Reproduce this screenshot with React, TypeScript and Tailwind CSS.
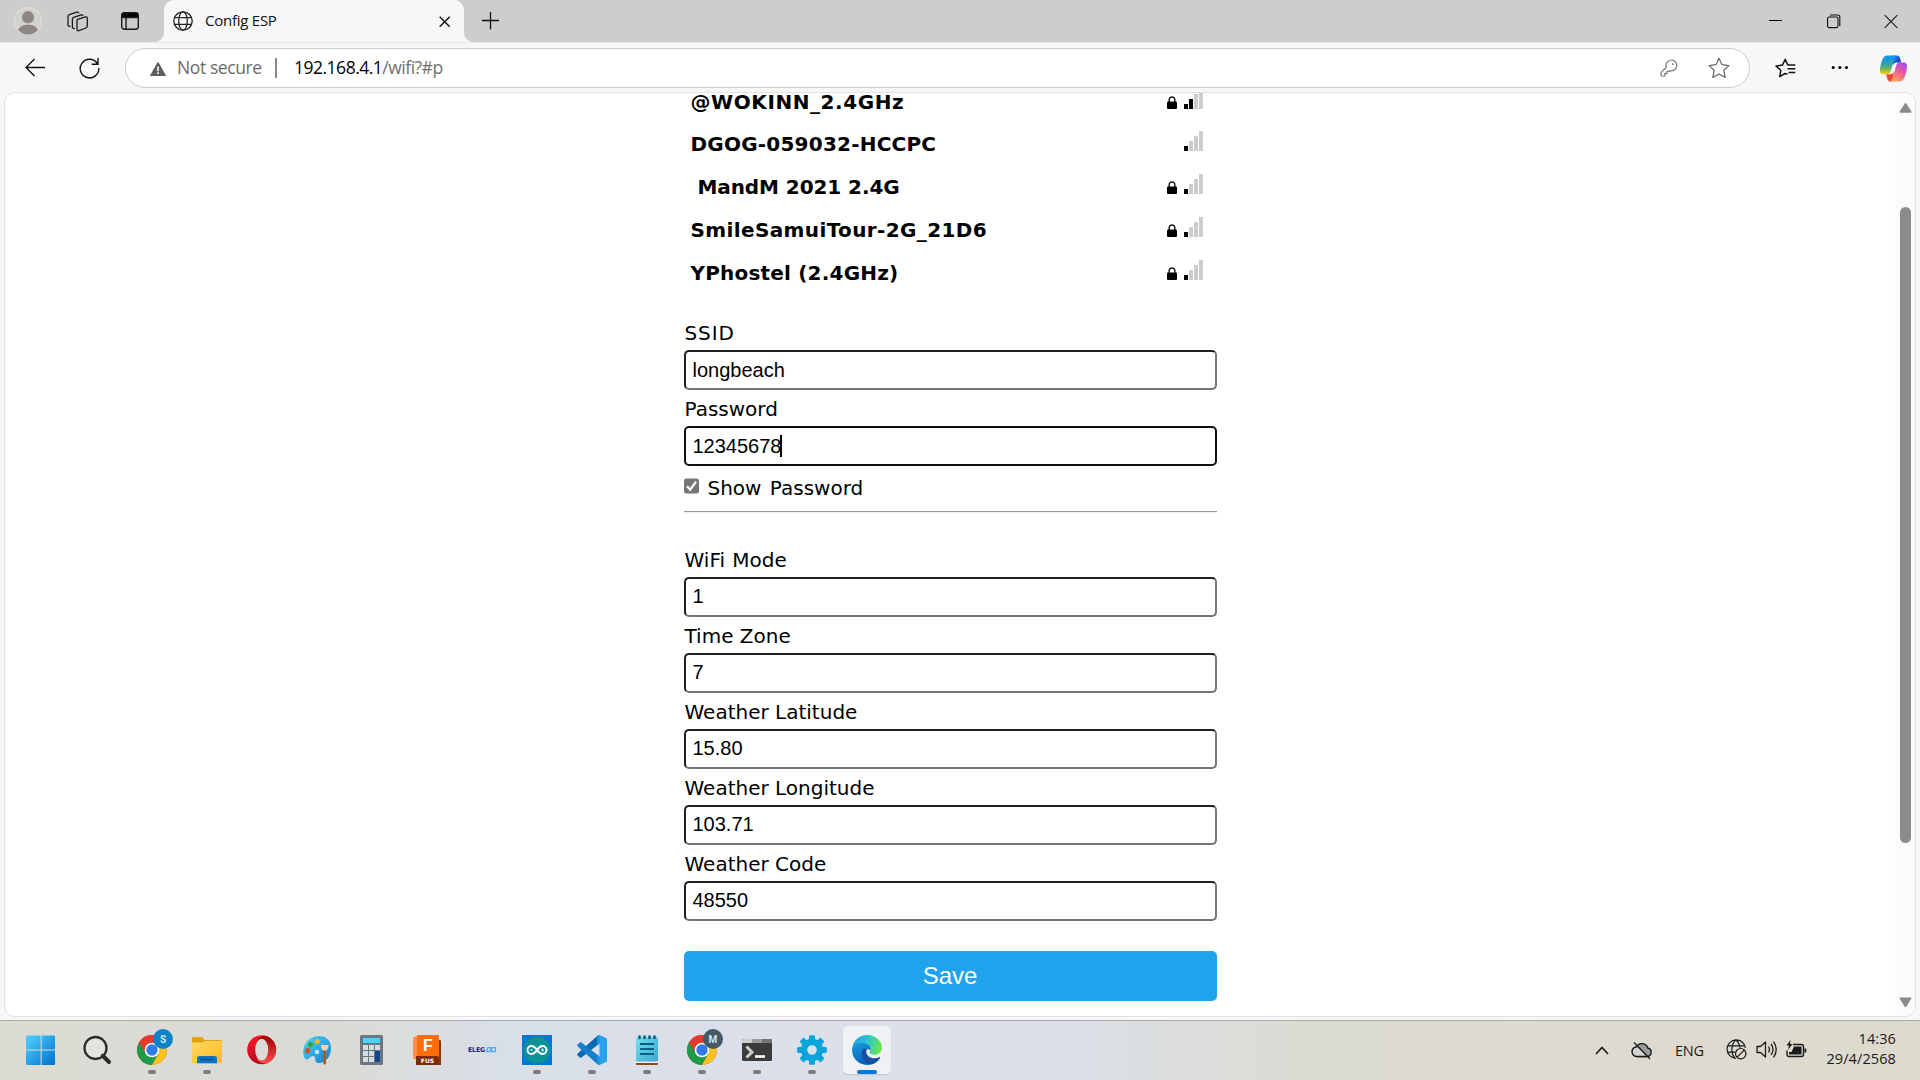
import React from "react";

type Kids = { children?: React.ReactNode };

/* ---------- Browser chrome ---------- */

function TitleBar() {
  return (
    <div className="flex h-[42px] shrink-0 bg-[#cdcdcd]">
      <div className="flex w-[164px] shrink-0 items-start">
        <svg className="mt-[7px] ml-[14px]" width="28" height="28" viewBox="0 0 28 28">
          <circle cx="14" cy="14" r="13.3" fill="#d3d1cd" stroke="#dedcd8" strokeWidth="1.2" />
          <circle cx="14" cy="10.2" r="6.1" fill="#8b8785" />
          <path d="M4 22.8c2-3.6 5.600-5 10-5s8 1.400 10 5c-2.600 3-6 4.700-10 4.700s-7.400-1.700-10-4.700z" fill="#8b8785" />
        </svg>
        <svg className="mt-[11px] ml-[25px]" width="21" height="21" viewBox="0 0 21 21" fill="none" stroke="#1b1b1b" strokeWidth="1.300" strokeLinejoin="round" strokeLinecap="round">
          <path d="M10.600 8.300 18.600 5.900c1-.3 1.700.2 1.700 1.200v8c0 .9-.5 1.600-1.400 1.900l-7 2.600c-1 .4-1.900-.1-1.900-1.200v-8.200c0-.9-.2-1.600.6-1.900z" />
          <path d="M7.300 17.500c-1 .2-1.900-.2-1.900-1.400V8.300c0-1 .5-1.700 1.400-2l7.300-2.400c.9-.3 1.500 0 1.700.6" />
          <path d="M3 15.300c-1.200.1-2-.3-2-1.400V5.600c0-1 .5-1.600 1.400-1.900l7.300-2.500c.9-.3 1.600-.1 1.900.6" />
        </svg>
        <svg className="mt-[12px] ml-[33px]" width="18" height="18" viewBox="0 0 18 18" fill="none" stroke="#1b1b1b" strokeWidth="1.400">
          <rect x=".7" y=".7" width="16.600" height="16.600" rx="2.800" />
          <path d="M.7 5.500V3.500A2.800 2.800 0 0 1 3.500.7h11a2.800 2.800 0 0 1 2.800 2.800v2z" fill="#000" />
          <path d="M5 5v12" />
        </svg>
      </div>
      <div className="relative flex h-[42px] w-[300px] shrink-0 rounded-t-[10px] bg-[#f7f7f7]">
        <svg className="absolute bottom-0 -left-[9px]" width="9" height="9" viewBox="0 0 9 9"><path d="M9 0v9H0A9 9 0 0 0 9 0z" fill="#f7f7f7" /></svg>
        <svg className="absolute -right-[9px] bottom-0" width="9" height="9" viewBox="0 0 9 9"><path d="M0 0v9h9A9 9 0 0 1 0 0z" fill="#f7f7f7" /></svg>
        <svg className="mt-[11px] ml-[9px]" width="20" height="20" viewBox="0 0 20 20" fill="none" stroke="#222" strokeWidth="1.300">
          <circle cx="10" cy="10" r="9.200" />
          <ellipse cx="10" cy="10" rx="4.300" ry="9.200" />
          <path d="M1.500 6.700h17M1.500 13.300h17" />
        </svg>
        <span className="mt-[9px] ml-[12px] w-[200px] font-['Open_Sans'] text-[15px] leading-[22px] tracking-[-0.25px] text-[#111]">Config ESP</span>
        <svg className="mt-[16px] ml-[34px]" width="12" height="12" viewBox="0 0 12 12" stroke="#111" strokeWidth="1.400"><path d="M.7.700l10 10M10.700.7.700 10.700" /></svg>
      </div>
      <svg className="mt-[12px] ml-[18px]" width="17" height="18" viewBox="0 0 17 18" stroke="#111" strokeWidth="1.300"><path d="M8.500 0v17.500M0 8.500h17" /></svg>
      <div className="mt-[14px] mr-[22px] ml-auto flex items-start">
        <svg className="mt-[6px]" width="13" height="2"><path d="M0 .5h13" stroke="#000" /></svg>
        <svg className="ml-[45px]" width="14" height="15" viewBox="0 0 14 15" fill="none" stroke="#111" strokeWidth="1.100">
          <rect x=".6" y="3" width="10.400" height="10.600" rx="1.500" />
          <path d="M3 1h7.500a2.300 2.300 0 0 1 2.300 2.300V12" />
        </svg>
        <svg className="ml-[43px]" width="14" height="15" viewBox="0 0 14 15" stroke="#222" strokeWidth="1.200"><path d="M.7 1.200 13.300 13.800M13.300 1.200.7 13.800" /></svg>
      </div>
    </div>
  );
}

const STAR = "M10 1.200 12.700 7l6.300.8-4.600 4.300 1.200 6.400L10 15.500 4.400 18.500l1.200-6.400L1 7.800 7.300 7z";

function Toolbar() {
  return (
    <div className="flex h-[50px] shrink-0 items-start border-t border-[#e6e6e6] bg-[#f7f7f7]">
      <svg className="mt-[15px] ml-[25px]" width="20" height="19" viewBox="0 0 20 19" fill="none" stroke="#111" strokeWidth="1.300"><path d="M9.500 1 1 9.500 9.500 18M1 9.500h19" /></svg>
      <svg className="mt-[14px] ml-[34px]" width="21" height="22" viewBox="0 0 21 22" fill="none" stroke="#111" strokeWidth="1.400">
        <path d="M18.300 6.500A9.300 9.300 0 1 0 19.800 11M19 1v6.300h-6.300" />
      </svg>
      <div className="mt-[5px] ml-[25px] flex h-[40px] w-[1625px] items-center rounded-full border border-[#cbcbcb] bg-white font-['Open_Sans']">
        <svg className="mt-[2px] ml-[24px]" width="16" height="14" viewBox="0 0 16 14">
          <path d="M8 .3c.4 0 .7.200.9.600l6.800 12c.3.500 0 1.100-.7 1.100H1c-.7 0-1-.6-.7-1.100l6.800-12c.2-.4.5-.6.9-.6z" fill="#5e5e5e" />
          <path d="M7.200 4.500h1.600v4.700H7.200zM7.200 10.300h1.600v1.700H7.200z" fill="#fff" />
        </svg>
        <span className="mb-[2px] ml-[11px] w-[98px] text-[17.500px] leading-[24px] tracking-[-0.4px] text-[#6b6b6b]">Not secure</span>
        <span className="h-[20px] w-[2px] bg-[#8a8a8a]" />
        <span className="mb-[2px] ml-[17px] text-[17.500px] leading-[24px] tracking-[-0.5px] text-[#6f6f6f]"><span className="text-black">192.168.4.1</span>/wifi?#p</span>
        <svg className="mr-[30px] ml-auto" width="18" height="18" viewBox="0 0 18 18" fill="none" stroke="#777" strokeWidth="1.200" strokeLinejoin="round">
          <path d="M11.500 1A5.400 5.400 0 0 0 6.400 8.300L1 13.600V16a1 1 0 0 0 1 1h2.800v-2.300H7v-2.300h2.200l.7-.8A5.400 5.400 0 1 0 11.500 1z" />
          <circle cx="12.900" cy="5.200" r=".9" fill="#777" stroke="none" />
        </svg>
        <svg className="mr-[19px]" width="22" height="22" viewBox="0 0 20 20" fill="none" stroke="#666" strokeWidth="1.100" strokeLinejoin="round"><path d={STAR} /></svg>
      </div>
      <svg className="mt-[15px] ml-[25px]" width="22" height="21" viewBox="0 0 22 21" fill="none" stroke="#111" strokeWidth="1.500" strokeLinejoin="round">
        <path d="M12.500 16.200 10 15.500 4.800 18.600 5.800 12.300 1 8l6.500-.9L10.200 1.200 12.800 7h7.500" />
        <path d="M12.500 10.800h7.800M13.500 14.600h6.800" />
      </svg>
      <svg className="mt-[22px] ml-[34px]" width="18" height="5" viewBox="0 0 18 5"><circle cx="2.200" cy="2.500" r="1.500" /><circle cx="8.900" cy="2.500" r="1.500" /><circle cx="15.500" cy="2.500" r="1.500" /></svg>
      <svg className="mt-[12px] ml-[30px]" width="29" height="27" viewBox="0 0 29 27">
        <defs>
          <linearGradient id="cpA" x1="0" y1="0" x2="0" y2="1"><stop offset=".1" stopColor="#1597e8" /><stop offset=".45" stopColor="#2f9fae" /><stop offset=".7" stopColor="#6cb655" /><stop offset="1" stopColor="#ffc91a" /></linearGradient>
          <linearGradient id="cpB" x1="0.800" y1="0" x2=".3" y2="1"><stop offset="0" stopColor="#a14af5" /><stop offset=".45" stopColor="#e9569e" /><stop offset="1" stopColor="#ffa45c" /></linearGradient>
          <linearGradient id="cpC" x1="0" y1="0" x2="1" y2="1"><stop offset="0" stopColor="#2ba4f3" /><stop offset=".6" stopColor="#1747c9" /><stop offset="1" stopColor="#2455dd" /></linearGradient>
        </defs>
        <path d="M14 .6h3.800c1.800 0 2.800 1 3.300 2.700l1.100 4.200h-4.500c-2 0-3.100 1-3.700 2.900z" fill="url(#cpC)" />
        <path d="M14.500 26.400h-3.200c-1.600 0-2.500-1-3-2.600L7 19.200h4c2 0 3-.7 3.600-2.600z" fill="#ea4a35" />
        <path d="M18 .6H8.400C5 .6 3.500 3.800 2.200 8.200.9 12.500-.6 19.200 4 19.200h4.200c2 0 3-1.200 3.600-3.100l3-10.300C15.500 3.300 16.200.6 18 .6z" fill="url(#cpA)" />
        <path d="M11 26.400h9.700c3.300 0 4.800-3.300 6-7.600 1.300-4.300 2.800-11.300-1.800-11.300h-4.100c-2 0-3 1.200-3.600 3.100l-3 10.200c-.7 2.700-1.400 5.600-3.200 5.600z" fill="url(#cpB)" />
      </svg>
    </div>
  );
}

/* ---------- Configuration page ---------- */

const BAR_HEIGHTS = ["h-[5px]", "h-[10px]", "h-[15px]", "h-[20px]"];

function Network({ children, locked = true, level = 1, height = "h-[43px]", spacing = "" }: Kids & { locked?: boolean; level?: number; height?: string; spacing?: string }) {
  return (
    <div className={`flex items-end pr-[14px] pl-[7px] ${height}`}>
      <span className={`mb-[13px] text-[20px] leading-[16px] font-bold whitespace-pre ${spacing}`}>{children}</span>
      {locked && (
        <svg className="mb-[14px] ml-auto" width="10" height="13" viewBox="0 0 10 13">
          <path d="M2.200 7V3.800a2.800 2.800 0 0 1 5.600 0V7" fill="none" stroke="#222" strokeWidth="1.500" />
          <rect y="5.500" width="10" height="7.500" rx="1" />
        </svg>
      )}
      <div className={`mb-[14px] flex items-end gap-px ${locked ? "ml-[7px]" : "ml-auto"}`}>
        {BAR_HEIGHTS.map((h, i) => (
          <span key={h} className={`w-[4px] ${h} ${i < level ? "bg-black" : "bg-[#cccccc]"}`} />
        ))}
      </div>
    </div>
  );
}

function Field({ label, value, focused = false, raised = false, spacing = "" }: { label: string; value: string; focused?: boolean; raised?: boolean; spacing?: string }) {
  return (
    <div>
      <div className={`flex h-[36px] items-center pt-[2px] pl-px text-[20px] whitespace-nowrap ${spacing}`}>{label}</div>
      <div
        className={`flex h-[40px] items-center rounded-[5px] border-2 bg-white pl-[7px] font-['Liberation_Sans'] text-[20px] leading-[24px] ${raised ? "pb-[2px]" : ""} ${
          focused ? "border-[#101010]" : "border-t-[#202020] border-r-[#767676] border-b-[#767676] border-l-[#202020]"
        }`}
      >
        <span>{value}</span>
        {focused && <span className="-ml-px h-[22px] w-[2px] bg-black" />}
      </div>
    </div>
  );
}

function ConfigPage() {
  return (
    <div className="mx-[4px] flex h-[925px] shrink-0 overflow-hidden rounded-[11px] border border-[#e2e2e2] bg-white font-['DejaVu_Sans'] text-black">
      <div className="flex flex-1 justify-center">
        <div className="w-[533px]">
          <div className="-mt-[12px]">
            <Network height="h-[42px]" level={2} spacing="tracking-[0.58px]">@WOKINN_2.4GHz</Network>
            <Network height="h-[42px]" locked={false} spacing="tracking-[0.22px]">DGOG-059032-HCCPC</Network>
            <Network spacing="tracking-[-0.07px]"> MandM 2021 2.4G</Network>
            <Network spacing="tracking-[0.38px]">SmileSamuiTour-2G_21D6</Network>
            <Network spacing="tracking-[0.2px]">YPhostel (2.4GHz)</Network>
          </div>
          <div className="mt-[20px]">
            <Field label="SSID" value="longbeach" spacing="tracking-[0.9px]" />
            <Field label="Password" value="12345678" focused />
          </div>
          <div className="flex h-[45px] items-start">
            <svg className="mt-[12px]" width="16" height="16" viewBox="0 0 16 16">
              <rect width="15" height="15" y=".5" rx="2.500" fill="#767676" />
              <path d="m3 8.300 3.200 3.400 5.800-8" fill="none" stroke="#fff" strokeWidth="2.200" />
            </svg>
            <span className="mt-[10px] ml-[8px] text-[20px] leading-[24px] [word-spacing:2px]">Show Password</span>
          </div>
          <div className="h-[2px] border-t border-[#9a9a9a] bg-[#eeeeee]" />
          <div className="mt-[28px]">
            <Field label="WiFi Mode" value="1" raised spacing="[word-spacing:1px]" />
            <Field label="Time Zone" value="7" raised />
            <Field label="Weather Latitude" value="15.80" raised />
            <Field label="Weather Longitude" value="103.71" raised />
            <Field label="Weather Code" value="48550" raised />
          </div>
          <button className="mt-[30px] flex h-[50px] w-full items-center justify-center rounded-[5px] bg-[#1fa3ec] font-['Liberation_Sans'] text-[24px] text-white">Save</button>
        </div>
      </div>
      <div className="flex w-[20px] flex-col items-center bg-[#fbfbfb]">
        <svg className="mt-[9px] shrink-0" width="13" height="11" viewBox="0 0 13 11"><path d="M6.500 1.700 11.800 10H1.200z" fill="#8b8b8b" stroke="#8b8b8b" strokeWidth="1.500" strokeLinejoin="round" /></svg>
        <div className="mt-[94px] h-[636px] w-[11px] shrink-0 rounded-full bg-[#8b8b8b]" />
        <svg className="mt-[154px] shrink-0" width="13" height="11" viewBox="0 0 13 11"><path d="M6.500 9.500 1.200 1.200h10.600z" fill="#8b8b8b" stroke="#8b8b8b" strokeWidth="1.500" strokeLinejoin="round" /></svg>
      </div>
    </div>
  );
}

/* ---------- Taskbar ---------- */

function Icon({ children }: Kids) {
  return <svg width="30" height="30" viewBox="0 0 30 30" className="overflow-visible">{children}</svg>;
}

function Task({ children, running = false, active = false }: Kids & { running?: boolean; active?: boolean }) {
  return (
    <div className={`relative flex size-[48px] items-center justify-center rounded-[5px] ${active ? "bg-[#eff1f4] shadow-[0_1px_1px_rgba(0,0,0,0.12)]" : ""}`}>
      {children}
      {running && <span className="absolute bottom-0 left-[20px] h-[4px] w-[8px] rounded-full bg-[#7c7c7c]" />}
      {active && <span className="absolute bottom-0 left-[14px] h-[4px] w-[20px] rounded-full bg-[#0078d7]" />}
    </div>
  );
}

function Chrome({ letter, color }: { letter: string; color: string }) {
  return (
    <div className="relative">
      <Icon>
        <circle cx="15" cy="15" r="15" fill="#ea4335" />
        <path d="M15 15 2 7.500A15 15 0 0 0 15 30l6.500-11.200z" fill="#1f9a48" />
        <path d="M15 8h13.200A15 15 0 0 1 15 30l6.500-11.200z" fill="#fcc31e" />
        <path d="M2 7.500A15 15 0 0 1 28.200 8H15L8.900 18.500z" fill="#e33b2e" />
        <circle cx="15" cy="15" r="7.300" fill="#fff" />
        <circle cx="15" cy="15" r="5.700" fill="#2f7bee" />
      </Icon>
      <span className={`absolute -top-[6px] left-[16px] flex size-[20px] items-center justify-center rounded-full font-['Roboto'] text-[10px] font-bold text-[#cfe4f0] ${color}`}>{letter}</span>
    </div>
  );
}

function Taskbar() {
  return (
    <div className="flex h-[60px] shrink-0 border-t border-[#a9a9a9] bg-[linear-gradient(90deg,#dcdbd4_0%,#dbdbd5_17%,#d9dfe8_26%,#dbe0ea_45%,#dbdfe6_56%,#dcdbd3_68%,#dddbd1_85%,#dddacd_100%)]">
      <div className="mt-[5px] ml-[18px] flex gap-[7px]">
        <Task>
          <Icon>
            <defs><linearGradient id="win" x1="0" y1="0" x2="1" y2="1"><stop offset="0" stopColor="#51d3fb" /><stop offset="1" stopColor="#0070d0" /></linearGradient></defs>
            <path d="M0 .5h13.600v14H-1v-13a1 1 0 0 1 1-1zM14.600.5H27a1 1 0 0 1 1 1v13H14.600zM-1 15.500h14.600V30H0a1 1 0 0 1-1-1zM14.600 15.500H28V29a1 1 0 0 1-1 1H14.600z" fill="url(#win)" />
          </Icon>
        </Task>
        <Task>
          <Icon>
            <path d="M20.500 20.500 27 27" stroke="#2b2b2b" strokeWidth="4" strokeLinecap="round" />
            <circle cx="13.500" cy="13" r="11" fill="#ffffff40" stroke="#2b2b2b" strokeWidth="2.300" />
          </Icon>
        </Task>
        <Task running><Chrome letter="S" color="bg-[#0a83c9]" /></Task>
        <Task running>
          <Icon>
            <defs><linearGradient id="fold" x1="0" y1="0" x2="1" y2="1"><stop offset="0" stopColor="#ffd766" /><stop offset="1" stopColor="#fdbb22" /></linearGradient></defs>
            <path d="M0 3.500A1.500 1.500 0 0 1 1.500 2h8.200c1.300 0 2 3 3.300 3h15.500A1.500 1.500 0 0 1 30 6.500V10H0z" fill="#e2a20d" />
            <path d="M0 7.500h10c1.500 0 2-1.500 3.500-1.500H30v21a1.200 1.200 0 0 1-1.200 1.200H1.200A1.200 1.200 0 0 1 0 27z" fill="url(#fold)" />
            <path d="M5 28.200V23.500a2.500 2.500 0 0 1 2.500-2.500h15a2.500 2.500 0 0 1 2.500 2.500v4.700z" fill="#1272c4" />
            <path d="M8.500 24.500h13" stroke="#064a8a" strokeWidth="1.300" />
          </Icon>
        </Task>
        <Task>
          <Icon>
            <defs>
              <linearGradient id="opA" x1="0" y1="0" x2="0" y2="1"><stop offset="0" stopColor="#ff1b2d" /><stop offset="1" stopColor="#b50a19" /></linearGradient>
              <linearGradient id="opB" x1="0" y1="0" x2="0" y2="1"><stop offset="0" stopColor="#9c0000" /><stop offset="1" stopColor="#ff4b4b" /></linearGradient>
            </defs>
            <circle cx="14.700" cy="14.700" r="14.500" fill="url(#opA)" />
            <path d="M10 5.200a9 9 0 0 1 14-1.500 14.500 14.500 0 0 1 0 22 9 9 0 0 1-14-1.500z" fill="url(#opB)" />
            <ellipse cx="14.700" cy="14.700" rx="6.500" ry="10.900" fill="#dcdcd7" />
          </Icon>
        </Task>
        <Task>
          <Icon>
            <defs><linearGradient id="pal" x1="0" y1="0" x2="1" y2="1"><stop offset="0" stopColor="#55d4f8" /><stop offset="1" stopColor="#0c7ed6" /></linearGradient></defs>
            <path d="M16 1C24 .5 29 5.500 29 13c0 8-5 15-12 15-6 0-2-6-5.500-7S6 27 3 23.500C-.5 19 0 3 16 1z" fill="url(#pal)" />
            <circle cx="15.400" cy="6.600" r="2.500" fill="#f4b90e" /><circle cx="8.500" cy="9.500" r="2.500" fill="#35a820" />
            <circle cx="5.600" cy="15.700" r="2.600" fill="#d2521d" /><circle cx="15" cy="17" r="2.200" fill="#c9ebfb" />
            <path d="M19 10h7.500c.3 3-1.500 4.500-2.300 6h-3c-.8-1.500-2.500-3-2.200-6z" fill="#f1d5b3" />
            <path d="M21.300 15.500h2.800V28c0 2-2.800 2-2.800 0z" fill="#a85d18" />
          </Icon>
        </Task>
        <Task>
          <Icon>
            <rect x="3" y="0" width="23" height="30" rx="1.500" fill="#6c7781" />
            <rect x="6" y="3" width="17" height="5" fill="#45d6fb" />
            <path d="M6 10h5v5H6zM12 10h5v5h-5zM18 10h5v5h-5zM6 16h5v5H6zM12 16h5v5h-5zM6 22h5v5H6zM12 22h5v5h-5z" fill="#d6dde2" />
            <path d="M18 16h5v11h-5z" fill="#12458b" />
          </Icon>
        </Task>
        <Task>
          <Icon>
            <path d="m1 2.500 5-2v25l-5-2z" fill="#ff9248" /><path d="M25 4l4 1.500V30H6l-1-5z" fill="#8a3400" />
            <rect x="5" width="22" height="22" rx="1" fill="#ff6c0a" /><rect x="4" y="21" width="22" height="9" fill="#7b2c05" />
            <text x="16" y="16" textAnchor="middle" fill="#fff" fontFamily="Liberation Sans" fontWeight="700" fontSize="16">F</text>
            <text x="15.500" y="28" textAnchor="middle" fill="#fff" fontFamily="DejaVu Sans" fontWeight="700" fontSize="6">FUS</text>
          </Icon>
        </Task>
        <Task>
          <Icon>
            <text x="1" y="17.200" textLength="17" lengthAdjust="spacingAndGlyphs" fill="#191970" fontFamily="DejaVu Sans" fontWeight="700" fontSize="6.500">ELEG</text>
            <path d="M20.800 12.700h2.600l-.5 4h-3.500zM25.200 12.700h3.500l-.5 4h-3.500z" fill="none" stroke="#49aaff" strokeWidth="1.300" />
          </Icon>
        </Task>
        <Task running>
          <Icon>
            <rect width="30" height="30" fill="#0078d4" /><circle cx="15" cy="15" r="13.500" fill="#0b9196" />
            <path d="M15 15c-2-3-3.500-4-5.500-4a4 4 0 0 0 0 8c2 0 3.500-1 5.500-4s3.500-4 5.500-4a4 4 0 0 1 0 8c-2 0-3.500-1-5.500-4z" fill="none" stroke="#fff" strokeWidth="1.900" />
            <path d="M8.300 15h2.500M19.300 15h2.600M20.600 13.700v2.600" stroke="#fff" strokeWidth="1" />
          </Icon>
        </Task>
        <Task running>
          <Icon>
            <path d="M22.500 0 30 3.500v23L22.500 30z" fill="#27a3ed" />
            <path d="M22.500 0v8.500L4.500 22.500c-.6.500-1.300.4-1.800 0l-2-2c-.6-.6-.6-1.300 0-1.900L20.500.700z" fill="#0a69b4" />
            <path d="M22.500 30v-8.500L4.500 7.500c-.6-.5-1.300-.4-1.800 0l-2 2c-.6.600-.6 1.300 0 1.900l19.800 17.900z" fill="#1280cf" />
            <path d="M20.500.8 22.500 0v8.500l-3 2.500zM20.500 29.200l2 .8v-8.500l-3-2.500z" fill="#1b93df" />
          </Icon>
        </Task>
        <Task running>
          <Icon>
            <defs><linearGradient id="note" x1="0" y1="0" x2="1" y2="1"><stop offset="0" stopColor="#72e1ef" /><stop offset="1" stopColor="#3aa6cc" /></linearGradient></defs>
            <rect x="4" y="24" width="22" height="6" rx="1" fill="#994410" /><rect x="4" y="22" width="22" height="6" fill="#eee" />
            <rect x="4" y="2" width="22" height="24.500" rx="1.500" fill="url(#note)" />
            <path d="M8 9h14M8 14h14M8 19h14" stroke="#096083" strokeWidth="1.900" />
            <path d="M7.500 1.500v1.500M12.500 1.500v1.500M17.500 1.500v1.500M22.500 1.500v1.500" stroke="#155f7c" strokeWidth="2.600" strokeLinecap="round" />
          </Icon>
        </Task>
        <Task running><Chrome letter="M" color="bg-[#455a64]" /></Task>
        <Task running>
          <Icon>
            <rect y="4" width="30" height="22" rx="1.500" fill="#3b3b3b" /><path d="M0 8V5.500A1.500 1.500 0 0 1 1.500 4H10v4z" fill="#cfcfcf" /><path d="M10 4h10v4H10z" fill="#9a9a9a" /><path d="M20 4h8.500A1.500 1.500 0 0 1 30 5.500V8H20z" fill="#777" />
            <path d="m4.500 11.500 5.500 5.700-5.500 5.300" fill="none" stroke="#ccc" strokeWidth="3" /><path d="M13 21.500h10" stroke="#fff" strokeWidth="2.600" />
          </Icon>
        </Task>
        <Task running>
          <Icon>
            <g fill="#08a4dc">
              {[0, 45, 90, 135, 180, 225, 270, 315].map((a) => <rect key={a} x="12" y=".2" width="6" height="8" rx="1.300" transform={`rotate(${a} 15 15)`} />)}
            </g>
            <circle cx="15" cy="15" r="8" fill="none" stroke="#08a4dc" strokeWidth="6.400" />
          </Icon>
        </Task>
        <Task active>
          <Icon>
            <defs>
              <linearGradient id="edA" x1="0" y1=".2" x2="1" y2=".4"><stop offset="0" stopColor="#1b9de5" /><stop offset=".5" stopColor="#2bc3d2" /><stop offset="1" stopColor="#67e851" /></linearGradient>
              <linearGradient id="edB" x1="0" y1="0" x2=".5" y2="1"><stop offset="0" stopColor="#1aa0e4" /><stop offset="1" stopColor="#0b5bb8" /></linearGradient>
            </defs>
            <path d="M.2 13.500C1 5.500 7.500 0 15 0c8.500 0 15 6 15 12.500 0 5-3.600 7.300-7.500 7.300-3 0-5.200-1-5.200-2.200 0-1 1.400-1.400 1.400-3.500 0-3-3.200-5.200-7.500-5.200C6 8.900 2 11 .2 13.500z" fill="url(#edA)" />
            <path d="M0 15c0-4 4.500-7 9.500-7 5.500 0 9.200 2.500 9.200 6 0 .6-.1 1-.3 1.500-1-1-2.700-1.500-4.400-.9-4 1.400-4 7 0 10.600 2 1.900 4 2.900 6 3.400-1.500.9-3 1.300-5 1.300A15 15 0 0 1 0 15z" fill="url(#edB)" />
            <path d="M10.900 14c-3 6 1 12.500 7 15.700 4.500-.6 8.200-3.300 10.200-6.700.5-.8-.1-1.200-.8-.8-4.800 2.400-11.500.8-12.800-4.200-.4-1.400-.2-2.600.6-3.800-1.800-.6-3.300-.5-4.200-.2z" fill="#14509b" />
          </Icon>
        </Task>
      </div>
      <div className="ml-auto flex items-start text-[#1b1b1b]">
        <svg className="mt-[25px]" width="14" height="9" viewBox="0 0 14 9" fill="none" stroke="#1b1b1b" strokeWidth="1.600"><path d="m1 8 6-6.500L13 8" /></svg>
        <svg className="mt-[19px] ml-[22px]" width="22" height="20" viewBox="0 0 22 20" fill="none" stroke="#1b1b1b" strokeWidth="1.300">
          <path d="M6 16.500h10a4.300 4.300 0 0 0 .8-8.500A6.200 6.200 0 0 0 5.500 6.800 4.900 4.900 0 0 0 6 16.500z" fill="#9b9b9b" />
          <path d="M6 16.500h10l-5-5-4.500-4C2 7 .5 11 2 14a5 5 0 0 0 4 2.500z" fill="#d4d4d2" stroke="none" />
          <path d="M6 16.500h10M5.500 6.900A4.800 4.800 0 0 0 6 16.500" />
          <path d="M3 2.500 19 19" />
        </svg>
        <span className="mt-[19px] ml-[22px] w-[31px] font-['Open_Sans'] text-[14.500px] leading-[21px] tracking-[-0.2px]">ENG</span>
        <svg className="mt-[18px] ml-[20px]" width="21" height="21" viewBox="0 0 21 21" fill="none" stroke="#1b1b1b" strokeWidth="1.200">
          <path d="M10 19.300A9.200 9.200 0 1 1 19.400 9M1.200 6.800h17M1.200 13.200H9M8.700 19C4.700 14.500 4.700 5.500 10 .8c2.400 2.300 3.700 5 4 8" />
          <circle cx="14.700" cy="14.700" r="5.200" /><path d="m11.200 18.200 7-7" />
        </svg>
        <svg className="mt-[19px] ml-[9px]" width="21" height="19" viewBox="0 0 21 19" fill="none" stroke="#1b1b1b" strokeWidth="1.300" strokeLinejoin="round">
          <path d="M1 6.500h3.500L9.500 2v15l-5-4.500H1z" /><path d="M12.500 6.500c1.300 2 1.300 4 0 6M15 4c2.500 3.300 2.500 7.700 0 11M17.500 1.700c3.500 5 3.500 10.600 0 15.600" />
        </svg>
        <svg className="mt-[19px] ml-[9px]" width="21" height="18" viewBox="0 0 21 18">
          <path d="M7 4.500h8.500a2 2 0 0 1 2 2v8a2 2 0 0 1-2 2H3a2 2 0 0 1-2-2v-4" fill="none" stroke="#1b1b1b" strokeWidth="1.400" />
          <path d="M8 6.500h7.500v8H3v-2.500h2.500zM18.500 8.500h1.700v4h-1.700zM4.500 0l-4 5.500H3L2 10l4.500-6H4z" fill="#1b1b1b" />
        </svg>
        <div className="mt-[8px] mr-[24px] ml-[13px] flex w-[76px] flex-col items-end font-['Open_Sans'] text-[14.500px] leading-[20px] tracking-[0.1px] whitespace-nowrap">
          <span>14:36</span>
          <span>29/4/2568</span>
        </div>
      </div>
    </div>
  );
}

export default function App() {
  return (
    <div className="flex h-[1080px] w-[1920px] flex-col overflow-hidden bg-[#f7f7f7]">
      <TitleBar />
      <Toolbar />
      <ConfigPage />
      <div className="h-[3px] shrink-0" />
      <Taskbar />
    </div>
  );
}
